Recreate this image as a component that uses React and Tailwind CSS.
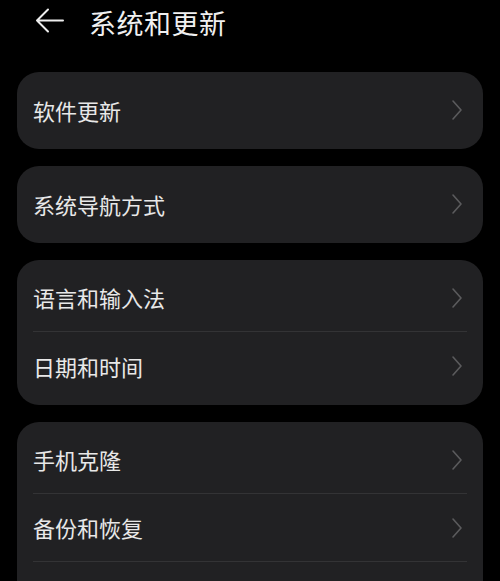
const groups = [
  ["软件更新"],
  ["系统导航方式"],
  ["语言和输入法", "日期和时间"],
  ["手机克隆", "备份和恢复", "重置"],
]

const Chevron = () => (
  <svg width="12" height="22" viewBox="0 0 12 22" fill="none" className="shrink-0">
    <path d="M2 2 L10 11 L2 20" stroke="#5b5b5d" strokeWidth="1.6" strokeLinecap="round" strokeLinejoin="round" />
  </svg>
)

export default function App() {
  return (
    <div
      className="w-[500px] h-[581px] overflow-hidden bg-black text-[#e8e8e8]"
      style={{ fontFamily: '"Noto Sans CJK SC", "Noto Sans", sans-serif' }}
    >
      {/* Header */}
      <div className="flex items-center h-[44px] pl-[35px]">
        <svg width="30" height="28" viewBox="0 0 30 28" fill="none">
          <path d="M2 12.5 H28 M13 1.5 L2 12.5 L13 23.5" stroke="#ededed" strokeWidth="2" strokeLinecap="round" strokeLinejoin="round" />
        </svg>
        <h1 className="ml-[24px] text-[27px] leading-none text-[#f0f0f0] tracking-[0.5px]">系统和更新</h1>
      </div>

      {/* Groups */}
      <div className="mt-[28px] px-[17px] flex flex-col gap-[17px]">
        {groups.map((items, gi) => (
          <div key={gi} className="bg-[#212123] rounded-[22px] pt-[4px] pb-[5px]">
            {items.map((label, i) => (
              <div key={label} className="px-[16px]">
                <div
                  className={`flex items-center justify-between h-[68px] pr-[4px] ${
                    i < items.length - 1 ? "border-b border-[#333335]" : ""
                  }`}
                >
                  <span className="text-[22px] leading-none pb-[1px]">{label}</span>
                  <Chevron />
                </div>
              </div>
            ))}
          </div>
        ))}
      </div>
    </div>
  )
}
